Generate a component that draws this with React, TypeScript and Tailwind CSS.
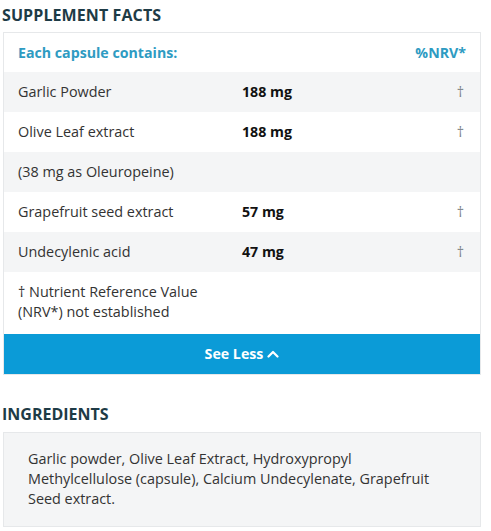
const rows = [
  { name: 'Garlic Powder', amount: '188 mg', nrv: '†', shade: true },
  { name: 'Olive Leaf extract', amount: '188 mg', nrv: '†', shade: false },
  { name: '(38 mg as Oleuropeine)', amount: '', nrv: '', shade: true },
  { name: 'Grapefruit seed extract', amount: '57 mg', nrv: '†', shade: false },
  { name: 'Undecylenic acid', amount: '47 mg', nrv: '†', shade: true },
]

function Row({ name, amount, nrv, shade }: { name: string; amount: string; nrv: string; shade: boolean }) {
  return (
    <div className={`flex items-center h-10 pl-[14px] pr-[16px] text-[14.4px] text-[#333] ${shade ? 'bg-[#f4f5f6]' : 'bg-white'}`}>
      <div className="w-[224px]">{name}</div>
      <div className="flex-1 font-bold text-[14.2px] text-[#111]">{amount}</div>
      <div className="text-[#7d8388]">{nrv}</div>
    </div>
  )
}

export default function App() {
  return (
    <div className="w-[491px] h-[531px] bg-white pl-[3px] pr-[10px] font-['Open_Sans',sans-serif] overflow-hidden">
      <h2 className="-ml-[1px] pt-[3px] h-[27px] text-[16px] leading-6 font-bold text-[#1e3b46] tracking-[0.1px]">
        SUPPLEMENT FACTS
      </h2>
      <div className="mt-[5px] border border-[#e6e8ea]">
        <div className="flex items-center justify-between h-[39px] pl-[14px] pr-[14px] text-[14.2px] font-bold text-[#2e9bc2]">
          <span>Each capsule contains:</span>
          <span>%NRV*</span>
        </div>
        {rows.map((r) => (
          <Row key={r.name} {...r} />
        ))}
        <div className="pl-[14px] pt-[10px] pb-[12px] text-[14.4px] leading-5 text-[#333]">
          † Nutrient Reference Value
          <br />
          (NRV*) not established
        </div>
        <button className="flex items-center justify-center gap-1 w-full h-10 bg-[#0b9bd7] text-white text-[14.2px] font-bold">
          See Less
          <svg width="12" height="10" viewBox="0 0 12 10" fill="none" stroke="white" strokeWidth="2.2" strokeLinecap="round" strokeLinejoin="round">
            <path d="M1.5 7.5 L6 3 L10.5 7.5" />
          </svg>
        </button>
      </div>
      <h2 className="-ml-[1px] mt-[27px] h-[30px] text-[16px] leading-6 font-bold text-[#1e3b46]">
        INGREDIENTS
      </h2>
      <div className="border border-[#e6e8ea] bg-[#f4f5f6] pl-6 pr-[44px] pt-[16px] pb-[17px] text-[14.4px] leading-5 text-[#333]">
        Garlic powder, Olive Leaf Extract, Hydroxypropyl Methylcellulose (capsule), Calcium Undecylenate, Grapefruit Seed extract.
      </div>
    </div>
  )
}
